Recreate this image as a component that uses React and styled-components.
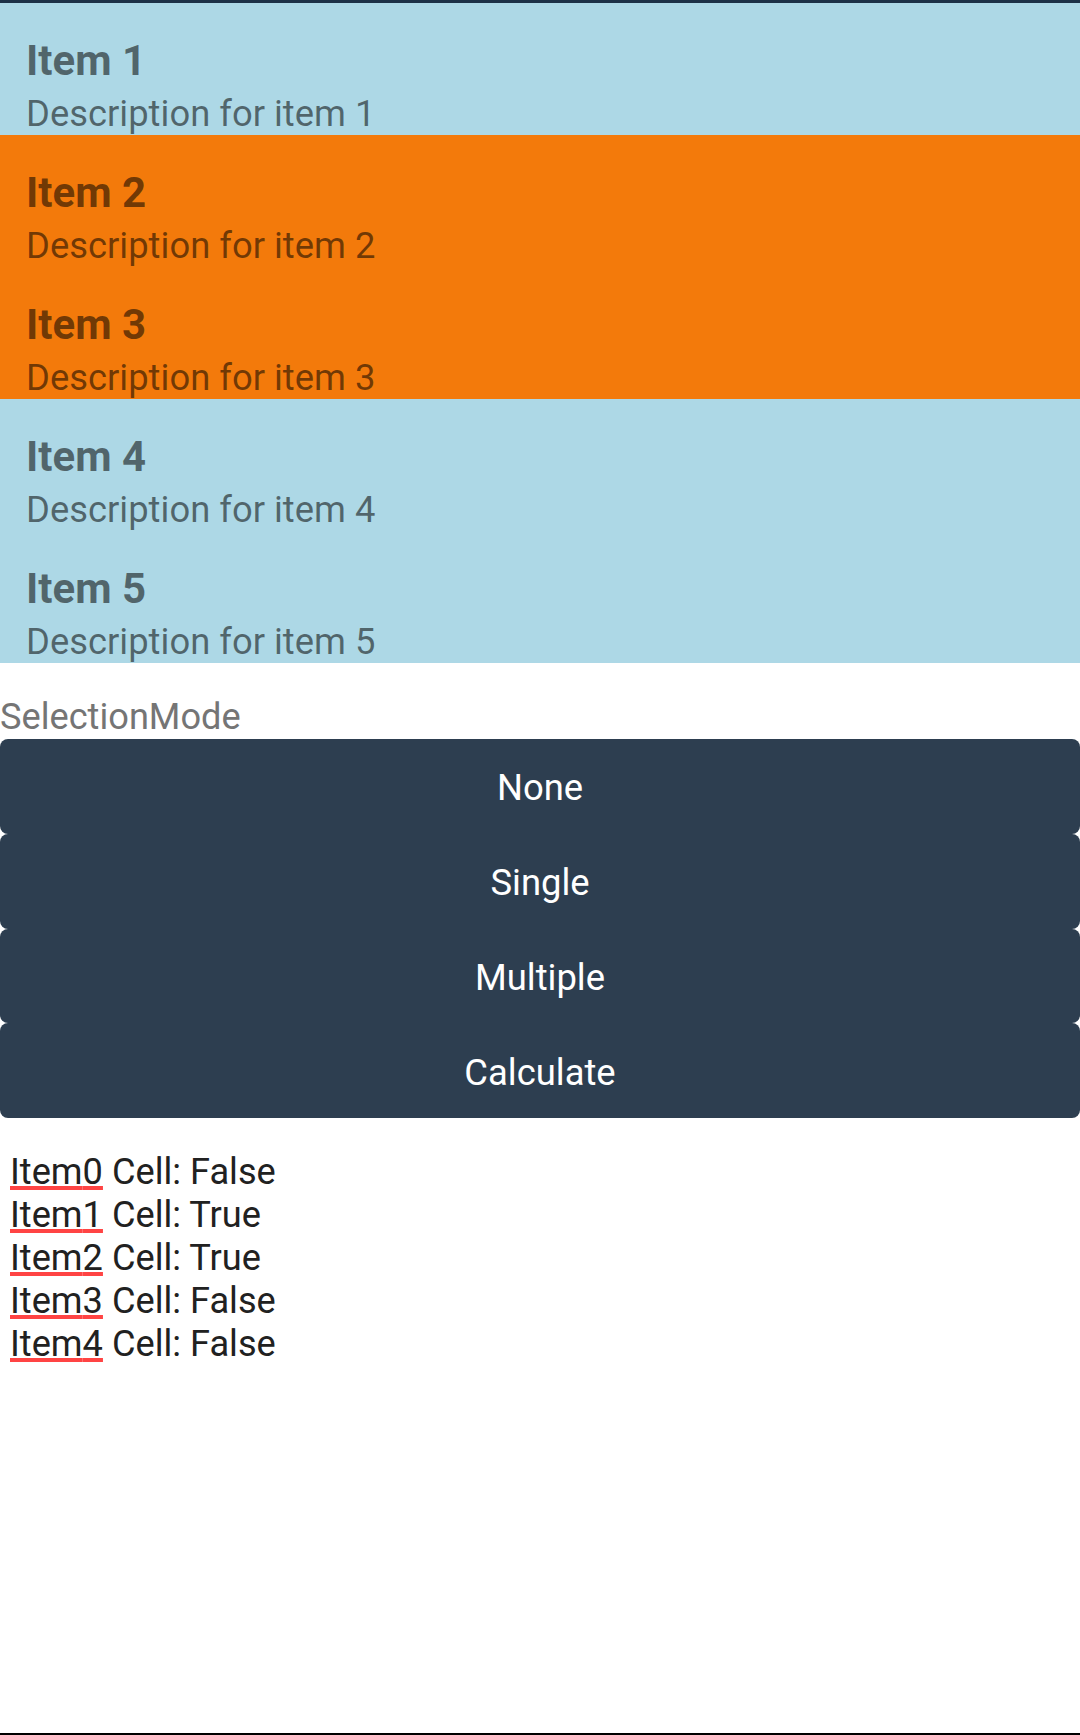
import React from 'react'
import styled, { createGlobalStyle } from 'styled-components'

const GlobalStyle = createGlobalStyle`
  html, body {
    margin: 0;
    padding: 0;
    background: #ffffff;
    font-family: Roboto, "Noto Sans", Arial, sans-serif;
  }
  * {
    box-sizing: border-box;
  }
`

const Screen = styled.div`
  min-height: 100vh;
  display: flex;
  flex-direction: column;
  border-top: 3px solid #1d3147;
  border-bottom: 2px solid #000000;
`

const List = styled.div`
  display: flex;
  flex-direction: column;
`

const Row = styled.div`
  height: 132px;
  padding: 33px 0 0 26px;
  background-color: ${p => (p.$selected ? '#f37a0b' : '#add8e6')};
  color: rgba(0, 0, 0, 0.54);
`

const Title = styled.div`
  font-size: 42px;
  font-weight: 700;
  line-height: 49px;
`

const Description = styled.div`
  margin-top: 7px;
  font-size: 36.4px;
  line-height: 43px;
`

const Label = styled.div`
  margin: 32px 0 1px;
  font-size: 36.2px;
  line-height: 43px;
  color: #757575;
`

const Buttons = styled.div`
  display: flex;
  flex-direction: column;
`

const Button = styled.button`
  height: 94.75px;
  width: 100%;
  border: none;
  border-radius: 8px;
  background: #2d3e50;
  color: #ffffff;
  font-family: inherit;
  font-size: 36.4px;
  padding: 3px 0 0;
  display: flex;
  align-items: center;
  justify-content: center;
`

const Results = styled.div`
  margin-top: 32px;
  padding-left: 10px;
  font-size: 36.2px;
  color: #212121;
`

const Line = styled.div`
  line-height: 43px;
`

const Misspelt = styled.span`
  text-decoration: underline;
  text-decoration-color: #ff4444;
  text-decoration-thickness: 4px;
  text-underline-offset: 2px;
`

const items = [
  { title: 'Item 1', desc: 'Description for item 1', selected: false },
  { title: 'Item 2', desc: 'Description for item 2', selected: true },
  { title: 'Item 3', desc: 'Description for item 3', selected: true },
  { title: 'Item 4', desc: 'Description for item 4', selected: false },
  { title: 'Item 5', desc: 'Description for item 5', selected: false },
]

const modes = ['None', 'Single', 'Multiple', 'Calculate']

const App = () => {
  return (
    <Screen>
      <GlobalStyle />
      <List>
        {items.map(it => (
          <Row key={it.title} $selected={it.selected}>
            <Title>{it.title}</Title>
            <Description>{it.desc}</Description>
          </Row>
        ))}
      </List>
      <Label>SelectionMode</Label>
      <Buttons>
        {modes.map(m => (
          <Button key={m}>{m}</Button>
        ))}
      </Buttons>
      <Results>
        {items.map((it, i) => (
          <Line key={i}>
            <Misspelt>Item{i}</Misspelt> Cell: {it.selected ? 'True' : 'False'}
          </Line>
        ))}
      </Results>
    </Screen>
  )
}

export default App
